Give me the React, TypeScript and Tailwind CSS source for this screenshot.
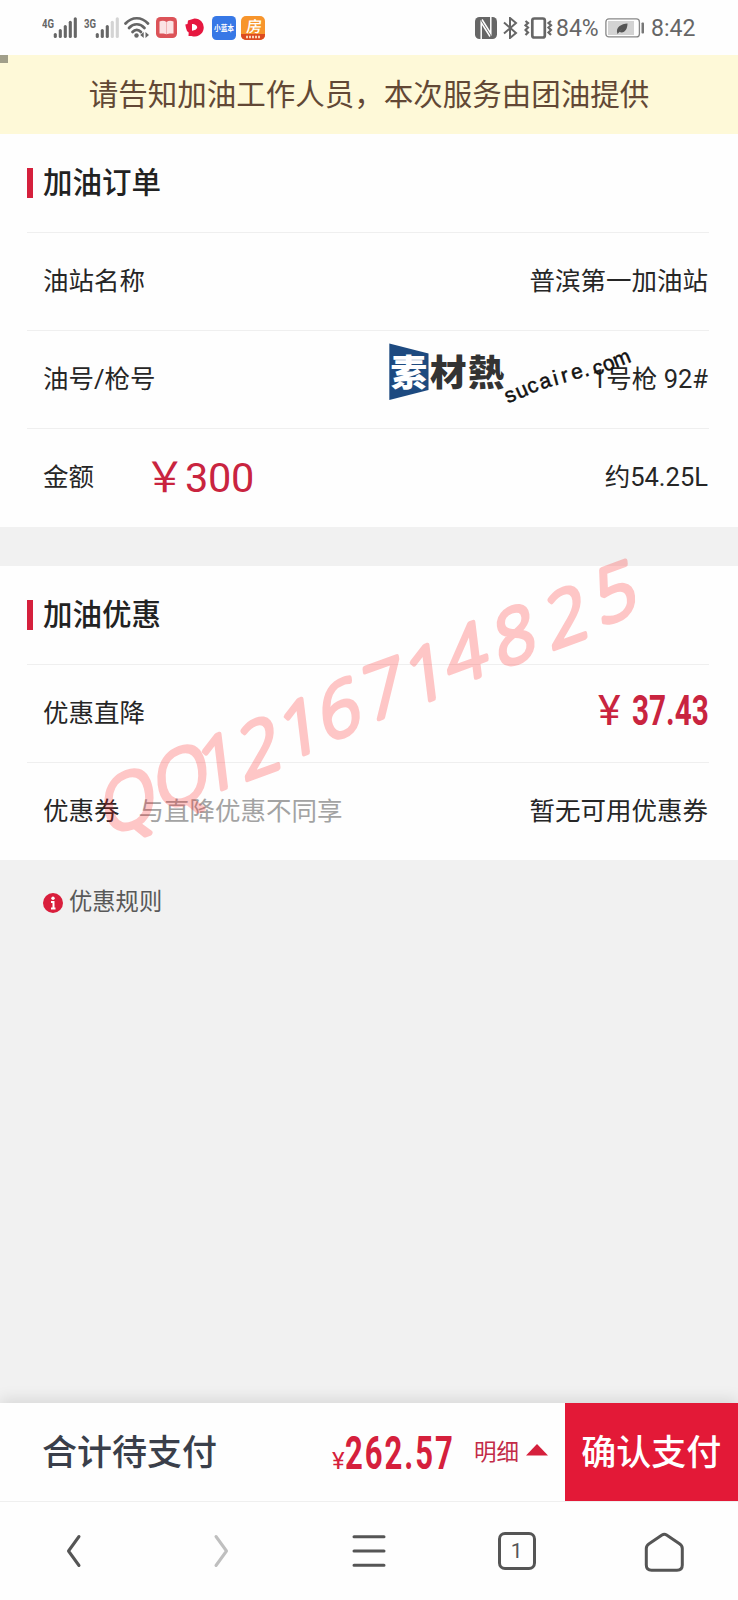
import type { FC, ReactNode } from 'react';

interface RowProps {
  label: ReactNode;
  children: ReactNode;
}

interface SectionProps {
  title: string;
  children: ReactNode;
}

// Center point of every handwritten character
const contactGlyphs = [
  { char: 'Q', x: 129, y: 800 },
  { char: 'Q', x: 182, y: 776 },
  { char: '1', x: 219, y: 762 },
  { char: '2', x: 260, y: 747 },
  { char: '1', x: 301, y: 727 },
  { char: '6', x: 340, y: 709 },
  { char: '7', x: 384, y: 689 },
  { char: '1', x: 427, y: 673 },
  { char: '4', x: 466, y: 653 },
  { char: '8', x: 515, y: 635 },
  { char: '2', x: 567, y: 616 },
  { char: '5', x: 616, y: 592 },
];

const SignalIcon: FC<{ label: string; strength: number }> = ({ label, strength }) => (
  <svg width="35" height="24" viewBox="0 0 35 24">
    <text x="0" y="12" fontSize="13.5" fontWeight="700" fill="#666" textLength="12" lengthAdjust="spacingAndGlyphs">
      {label}
    </text>
    {[0, 1, 2, 3, 4].map(i => (
      <line
        key={i}
        x1={13.3 + i * 5}
        x2={13.3 + i * 5}
        y1={[18.5, 14.5, 10.5, 6.3, 2.8][i]}
        y2="20.5"
        stroke={i < strength ? '#666' : '#d4d4d4'}
        strokeWidth="3.1"
        strokeLinecap="round"
      />
    ))}
  </svg>
);

const WifiIcon: FC = () => (
  <svg width="26" height="24" viewBox="0 0 26 24" fill="none" stroke="#666" strokeWidth="2.7" strokeLinecap="round">
    <path d="M1.5 7.5C8 .5 17.500 .5 24 7.500" />
    <path d="M5 12C9.500 7 16 7 20.500 12" />
    <path d="M8.500 16C11 13.200 14.500 13.200 17 16" />
    <circle cx="12.500" cy="19.500" r="2.200" fill="#666" stroke="none" />
    <path d="M19.700 16v6l-3.500-3zM21.500 16v6l3.500-3z" fill="#666" stroke="none" />
  </svg>
);

const StatusBar: FC = () => (
  <div className="flex h-[55px] items-center justify-between bg-[#fefefe] pr-[43px] pl-[42px]">
    <div className="flex items-center">
      <SignalIcon label="4G" strength={5} />
      <span className="w-[7px]"></span>
      <SignalIcon label="3G" strength={3} />
      <span className="w-[5px]"></span>
      <WifiIcon />
      {/* Reader app */}
      <svg className="ml-[6px]" width="21" height="21" viewBox="0 0 21 21">
        <rect width="21" height="21" rx="4.500" fill="#dc5358" />
        <path d="M3.500 4.500c2.500-1 5-.8 7 .4 2-1.200 4.500-1.400 7-.4v12h-4l-3 .8-3-.8h-4z" fill="#fbe3e4" />
        <path d="M10.500 5v12" stroke="#f0b4b6" strokeWidth="1" />
      </svg>
      {/* Video app */}
      <svg className="ml-[8px]" width="19" height="19" viewBox="0 0 19 19">
        <path d="M9.500 .5a9 9 0 1 1-3 17.400L3.500 18l.2-3.500A9 9 0 0 1 2 13L1 10 .3 6.500 2.500 6l.5-3.500z" fill="#e6173f" />
        <path d="M7 6c2.600 0 5.200 1.500 5.200 3.300S9.600 12.700 7 12.700z" fill="#fff" />
      </svg>
      <svg className="ml-[8px] overflow-visible" width="24" height="24" viewBox="0 0 24 24">
        <rect width="24" height="24" rx="4.500" fill="#3778e6" />
        <text x="2" y="15.300" fontSize="8" fontWeight="700" fill="#fff" textLength="20" lengthAdjust="spacingAndGlyphs">
          小蓝本
        </text>
      </svg>
      <svg className="ml-[5px]" width="24" height="24" viewBox="0 0 24 24">
        <rect width="24" height="24" rx="5" fill="#f7952c" />
        <path d="M0 18h24v1a5 5 0 0 1-5 5H5a5 5 0 0 1-5-5z" fill="#dc4a20" />
        <text transform="translate(5 15.500) skewX(-6)" fontSize="15.500" fontWeight="500" fill="#fff">房</text>
        <path d="M5 21h14" stroke="#fbd3b5" strokeWidth="2.400" strokeDasharray="2 1" />
      </svg>
    </div>

    <div className="flex items-center">
      {/* NFC */}
      <svg className="-ml-px" width="22" height="22" viewBox="0 0 22 22">
        <rect width="22" height="22" rx="4.500" fill="#666" />
        <path d="M6.200 22V5.500L15 19.500" fill="none" stroke="#fefefe" strokeWidth="1.500" />
        <path d="M15.800 0v16.500L7 2.500" fill="none" stroke="#fefefe" strokeWidth="1.500" />
      </svg>
      {/* Bluetooth */}
      <svg className="ml-[6px]" width="15" height="22" viewBox="0 0 15 22" fill="none" stroke="#666" strokeWidth="2">
        <path d="M1 5.500l12 10.500-6 5V1l6 5L1 16.500" />
      </svg>
      {/* Vibrate */}
      <svg className="ml-[6px]" width="29" height="22" viewBox="0 0 29 22" fill="none" stroke="#666">
        <rect x="8.300" y="1.500" width="12.500" height="19" rx="2" strokeWidth="2.700" />
        <path d="M1.500 4L4 6 1.500 8.300 4 10.500 1.500 13 4 15.500 1.500 18M27 4l-2.500 2L27 8.300l-2.500 2.200L27 13l-2.500 2.500L27 18" strokeWidth="2.200" />
      </svg>
      <span className="mt-[2px] ml-[3px] w-[43px] text-[23px] leading-none whitespace-nowrap text-[#666]">84%</span>
      <svg className="ml-[6px]" width="40" height="20" viewBox="0 0 40 20">
        <rect x=".9" y=".9" width="33.500" height="18" rx="3" fill="none" stroke="#888" strokeWidth="1.300" />
        <rect x="3" y="3" width="26" height="14" fill="#d3d3d3" />
        <path d="M12.500 16c-2.500-7 4-10 10-10.500C22.500 11 19.500 16 14.500 14l3-3.500z" fill="#555" />
        <rect x="36.500" y="4.500" width="2.500" height="11" rx=".8" fill="#777" />
      </svg>
      <span className="mt-[2px] ml-[6px] w-[44px] text-[23px] leading-none whitespace-nowrap text-[#666]">8:42</span>
    </div>
  </div>
);

const Section: FC<SectionProps> = ({ title, children }) => (
  <section className="bg-[#fefefe] pr-[29px] pl-[27px]">
    <div className="flex h-[98.5px] items-center">
      <div className="h-[30px] w-[6px] bg-[#d5203c]"></div>
      <h2 className="mt-[2px] ml-[10px] text-[29.5px] leading-none font-medium text-[#222]">{title}</h2>
    </div>
    {children}
  </section>
);

const Row: FC<RowProps> = ({ label, children }) => (
  <div className="flex h-[98.2px] items-center justify-between border-t border-[#efefef] pr-px pl-[16px] text-[25.5px] leading-none text-[#262626]">
    <div className="flex items-center">{label}</div>
    <div className="flex items-center">{children}</div>
  </div>
);

const SiteMark: FC = () => (
  <svg className="absolute top-[335px] left-[385px]" width="260" height="75" viewBox="385 335 260 75">
    <path d="M389.300 343.500L428.500 353.500v36.500l-39.200 10z" fill="#1d4a80" />
    <g fontSize="36.500" fontWeight="900">
      <text x="390.500" y="386" fill="#fff">素</text>
      <text x="430" y="386" fill="#333">材</text>
      <text x="468" y="386" fill="#333">熱</text>
    </g>
    <text
      fontFamily="Liberation Sans, sans-serif"
      fontSize="21"
      fill="#111"
      stroke="#111"
      strokeWidth=".5"
      x="508 519 530 541.500 555 563 573 585 595.500 605.500 616"
      y="403.500 399 394 389.500 385.500 383 380 377 376 372 368"
      rotate="-24 -24 -22 -18 -15 -15 -16 -20 -22 -22 -22"
    >
      sucaire.com
    </text>
  </svg>
);

const ContactMark: FC = () => (
  <svg className="pointer-events-none absolute top-[540px] left-[80px] overflow-visible" width="600" height="310" viewBox="80 540 600 310">
    <g
      fontFamily="Open Sans, sans-serif"
      fontSize="73"
      fontWeight="300"
      fill="#ff1e1e"
      stroke="#ff1e1e"
      strokeWidth="5"
      strokeLinejoin="round"
      textAnchor="middle"
      opacity=".25"
    >
      {contactGlyphs.map((g, i) => (
        <text key={i} transform={`translate(${g.x} ${g.y}) rotate(-20) skewX(-13)`} y="26">
          {g.char}
        </text>
      ))}
    </g>
  </svg>
);

const PayBar: FC = () => (
  <div className="flex h-[98px] items-center bg-[#fefefe] pl-[42px] shadow-[0_-4px_14px_rgba(0,0,0,0.1)]">
    <span className="mt-[2px] w-[290px] text-[35px] leading-none font-medium text-[#3a3f4a]">合计待支付</span>
    <div className="flex items-baseline leading-none text-[#d5203c]">
      <span className="w-[13px] text-[24px]">¥</span>
      <span className="inline-block w-[107px] origin-left scale-x-[0.66] text-[47px] font-bold tracking-[3px]">262.57</span>
    </div>
    <span className="ml-[22px] text-[22.5px] leading-none text-[#c22b48]">明细</span>
    <svg className="-mt-[5px] ml-[7px]" width="22" height="12" viewBox="0 0 22 12">
      <path d="M0 11.500L11 0l11 11.500z" fill="#d5203c" />
    </svg>
    <button className="ml-auto h-full w-[173.5px] bg-[#e31937] pt-[2px] text-[35px] leading-none font-medium text-white">确认支付</button>
  </div>
);

const BrowserNav: FC = () => (
  <nav className="grid h-[99px] grid-cols-5 place-items-center border-t border-[#efefef] bg-[#fefefe]">
    <svg width="40" height="40" viewBox="0 0 40 40" fill="none" stroke="#555" strokeWidth="3" strokeLinecap="round" strokeLinejoin="round">
      <path d="M25 5.500L14.500 20 25 34.500" />
    </svg>
    <svg width="40" height="40" viewBox="0 0 40 40" fill="none" stroke="#bfbfbf" strokeWidth="3" strokeLinecap="round" strokeLinejoin="round">
      <path d="M15 5.500L25.500 20 15 34.500" />
    </svg>
    <svg width="40" height="40" viewBox="0 0 40 40" stroke="#555" strokeWidth="3" strokeLinecap="round">
      <path d="M5 5.700h30M5 20h30M5 34.300h30" />
    </svg>
    <div className="flex h-[38px] w-[38px] items-center justify-center rounded-[7px] border-3 border-[#555] text-[21px] leading-none text-[#555]">
      1
    </div>
    <svg className="overflow-visible" width="40" height="40" viewBox="0 0 40 40" fill="none" stroke="#555" strokeWidth="3" strokeLinejoin="round">
      <path d="M18 4Q20.300 2.500 22.600 4L35.500 12.700Q38.300 14.500 38.300 17.500V34Q38.300 39.300 33 39.300H7.600Q2.300 39.300 2.300 34V17.500Q2.300 14.500 5.100 12.700Z" />
    </svg>
  </nav>
);

export default function App() {
  return (
    <div className="relative flex h-[1600px] w-[738px] flex-col overflow-hidden bg-[#f1f1f1] font-['Roboto','Noto_Sans_CJK_SC',sans-serif]">
      <StatusBar />
      <div className="relative flex h-[78.5px] items-center justify-center bg-[#fef9d8] pt-[2px] text-[29.5px] leading-none text-[#624835]">
        <div className="absolute top-0 left-0 h-[8px] w-[8px] bg-[#a19f8a]"></div>
        请告知加油工作人员，本次服务由团油提供
      </div>

      <Section title="加油订单">
        <Row label="油站名称">普滨第一加油站</Row>
        <Row label="油号/枪号">1号枪 92#</Row>
        <Row
          label={
            <>
              <span>金额</span>
              <span className="ml-[50px] text-[41.5px] tracking-[-0.4px] text-[#c9243f]">￥300</span>
            </>
          }
        >
          约54.25L
        </Row>
      </Section>

      <div className="mt-[39px]">
        <Section title="加油优惠">
          <Row label="优惠直降">
            <div className="mb-[6px] flex items-baseline text-[43px] text-[#c9243f]">
              <span className="w-[34px]">¥</span>
              <span className="inline-block w-[76px] origin-left scale-x-[0.69] font-bold">37.43</span>
            </div>
          </Row>
          <Row
            label={
              <>
                <span>优惠券</span>
                <span className="ml-[19px] text-[#a3a3a3]">与直降优惠不同享</span>
              </>
            }
          >
            暂无可用优惠券
          </Row>
        </Section>
      </div>

      <div className="mt-[30px] flex items-center pl-[43px] text-[23.3px] leading-none text-[#595959]">
        <svg width="20" height="20" viewBox="0 0 20 20">
          <circle cx="10" cy="10" r="10" fill="#d91e3c" />
          <circle cx="10" cy="5.200" r="1.700" fill="#fff" />
          <path d="M8 9h2.500v6.500M8 15.500h4.500" stroke="#fff" strokeWidth="2" fill="none" />
        </svg>
        <span className="mt-px ml-[6px]">优惠规则</span>
      </div>

      <div className="mt-auto">
        <PayBar />
        <BrowserNav />
      </div>

      <SiteMark />
      <ContactMark />
    </div>
  );
}
